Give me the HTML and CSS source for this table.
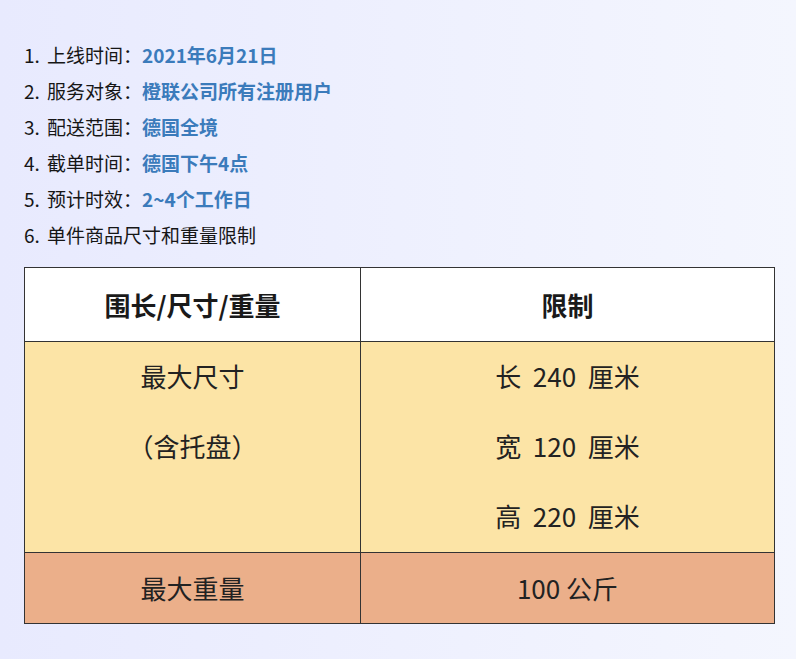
FILE: index.html
```html
<!DOCTYPE html>
<html lang="zh-CN">
<head>
<meta charset="utf-8">
<title>配送说明</title>
<link rel="stylesheet" href="styles.css">
</head>
<body>
<div class="page">
  <ol class="info">
    <li><span class="num">1.</span>上线时间：<strong>2021年6月21日</strong></li>
    <li><span class="num">2.</span>服务对象：<strong>橙联公司所有注册用户</strong></li>
    <li><span class="num">3.</span>配送范围：<strong>德国全境</strong></li>
    <li><span class="num">4.</span>截单时间：<strong>德国下午4点</strong></li>
    <li><span class="num">5.</span>预计时效：<strong>2~4个工作日</strong></li>
    <li><span class="num">6.</span>单件商品尺寸和重量限制</li>
  </ol>
  <table class="limits">
    <thead>
      <tr><th>围长/尺寸/重量</th><th>限制</th></tr>
    </thead>
    <tbody>
      <tr class="size">
        <td><p>最大尺寸</p><p>（含托盘）</p></td>
        <td><p>长&nbsp;&nbsp;240&nbsp;&nbsp;厘米</p><p>宽&nbsp;&nbsp;120&nbsp;&nbsp;厘米</p><p>高&nbsp;&nbsp;220&nbsp;&nbsp;厘米</p></td>
      </tr>
      <tr class="weight">
        <td><p>最大重量</p></td>
        <td><p>100 公斤</p></td>
      </tr>
    </tbody>
  </table>
</div>
</body>
</html>
```
FILE: styles.css
```css
html, body {
  margin: 0;
  padding: 0;
}
body {
  width: 796px;
  height: 659px;
  background: linear-gradient(90deg, #e8eafe 0%, #eef0fe 50%, #f4f6fe 100%);
  font-family: "Noto Sans CJK SC", "Noto Sans", sans-serif;
  color: #161616;
  overflow: hidden;
}
.page {
  padding: 37px 20px 0 24px;
}
.info {
  list-style: none;
  margin: 0;
  padding: 0;
  font-size: 19px;
  line-height: 36px;
}
.info li {
  margin: 0;
  white-space: nowrap;
}
.info .num {
  display: inline-block;
  width: 23px;
}
.info strong {
  color: #3b7bbb;
  font-weight: 700;
}
.limits {
  margin-top: 14px;
  width: 751px;
  border-collapse: collapse;
  table-layout: fixed;
  font-size: 26px;
  color: #222;
}
.limits th, .limits td {
  border: 1px solid #333;
  padding: 0;
  text-align: center;
  vertical-align: top;
}
.limits th:first-child, .limits td:first-child {
  width: 335px;
}
.limits th {
  background: #fff;
  font-weight: 700;
  height: 73px;
  vertical-align: middle;
  color: #1a1a1a;
}
.limits p {
  margin: 0;
  line-height: 70px;
}
.size td {
  background: #fce4a6;
  height: 210px;
}
.size p {
  position: relative;
  top: -1px;
}
.weight td {
  background: #ebaf8a;
  height: 70px;
}
```
